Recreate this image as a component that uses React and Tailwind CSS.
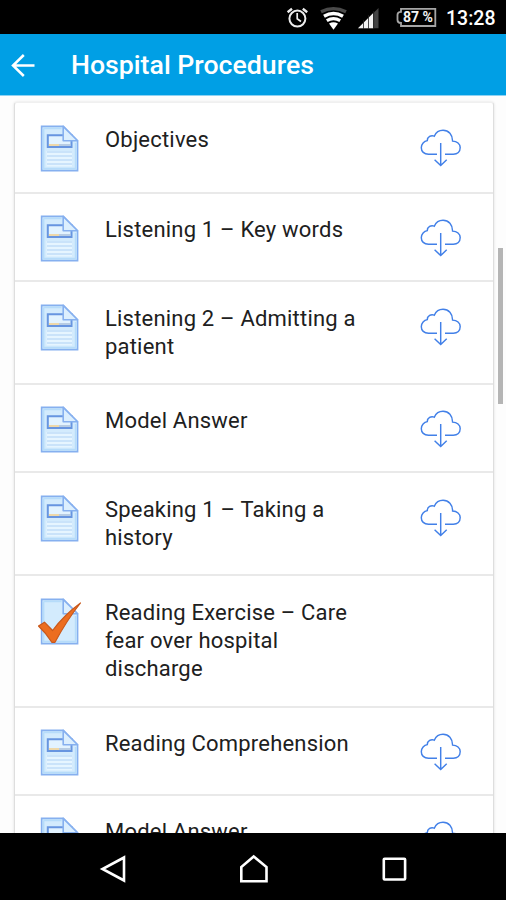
import React from "react";

const rows = [
  { lines: ["Objectives"], box: "h-[91px] pt-[23px]" },
  { lines: ["Listening 1 – Key words"], box: "h-[88px] pt-[22px]" },
  { lines: ["Listening 2 – Admitting a", "patient"], box: "h-[103px] pt-[23px]" },
  { lines: ["Model Answer"], box: "h-[88px] pt-[22px]" },
  { lines: ["Speaking 1 – Taking a", "history"], box: "h-[103px] pt-[23px]" },
  { lines: ["Reading Exercise – Care", "fear over hospital", "discharge"], box: "h-[132px] pt-[23px]", done: true },
  { lines: ["Reading Comprehension"], box: "h-[88px] pt-[22px]" },
  { lines: ["Model Answer"], box: "h-[88px] pt-[22px]" },
];

function PageIcon({ done }) {
  return (
    <svg className="-mt-px ml-6 h-[48px] w-[44px] shrink-0 overflow-visible" viewBox="0 0 44 48" fill="none">
      <path d="M2.6 1.4H24.2L38.6 15.8V45.6H2.6Z" fill="#d3ebfd" stroke="#86b0ef" strokeWidth="1.6" />
      <path d="M4.6 3.4H22.5M4.6 3.4V43.6H36.6V18" stroke="#b6dcfa" strokeWidth="1.6" />
      {!done && (
        <>
          <rect x="7.5" y="26" width="25.5" height="15.5" fill="#e6f5ff" />
          <path d="M8 27H33M8 31H33M8 35H33M8 39H33" stroke="#aed1f6" strokeWidth="1.2" />
          <path d="M8.8 10.2H32.5V22H8.8Z" fill="#e2f3ff" stroke="#6795e0" strokeWidth="2" />
          <path d="M10 20H20" stroke="#f0cf8c" strokeWidth="1.5" />
          <path d="M20 20H31.5" stroke="#a9bfda" strokeWidth="1.5" />
        </>
      )}
      <path d="M24.2 1.4V15.8H38.6Z" fill="#dceffe" stroke="#86b0ef" strokeWidth="1.6" strokeLinejoin="round" />
      {done && (
        <path d="M-0.5 28L5.5 24.2L13.6 32.5Q25 17 41.5 5Q28 22 16 44.3H12.8Q7 35 -0.5 28Z" fill="#ec6d20" stroke="#c9581b" strokeWidth="1.2" strokeLinejoin="round" />
      )}
    </svg>
  );
}

function CloudIcon() {
  return (
    <svg className="mr-[31px] mt-[3px] h-[40px] w-[42px] shrink-0" viewBox="0 -0.4 42 40" fill="none" stroke="#4280e8" strokeWidth="1.45">
      <path d="M17 24.9H8.5C4 24.9 1.3 22 1.3 18.3C1.3 14.5 4.1 11.7 7.3 11.2C7.2 7.5 11.2 5.3 14.3 6.8C16.2 2.5 19.5 0.9 23 0.9C28.7 0.9 32.6 5.4 32.6 11.7C37 11.7 40.2 14.6 40.2 18.2C40.2 22.2 37.5 24.9 33.3 24.9H25" />
      <path d="M20.7 13.5V36M14.6 30.4L20.7 36.2L26.7 30.4" />
    </svg>
  );
}

function StatusBar() {
  return (
    <div className="flex h-[34px] shrink-0 items-center bg-black pl-[286px] text-white">
      <svg className="h-[34px] w-[154px] shrink-0" viewBox="286 0 154 34" fill="none">
        <g stroke="#ededed" strokeWidth="2">
          <circle cx="297.4" cy="18.6" r="8" />
          <path d="M297.2 13V18.8L301 21.5" strokeWidth="1.7" />
          <path d="M287.6 12.2L292 8.8M302.8 8.8L307.2 12.2" strokeWidth="2.4" />
        </g>
        <path d="M321 11.8Q333.5 5.5 346 11.8" stroke="#4a4a4a" strokeWidth="3.2" />
        <path d="M324 16.2Q333.5 10.8 343 16.2" stroke="#fff" strokeWidth="3.6" />
        <path d="M326.8 20.6Q333.5 16.6 340.2 20.6" stroke="#fff" strokeWidth="3.2" />
        <path d="M329 23.6Q333.5 21 338 23.6L333.5 29.8Z" fill="#fff" />
        <path d="M358 28.3L378.5 8V28.3Z" fill="#444" />
        <path d="M358 28.3L373 13.3V28.3Z" fill="#f4f4f4" />
        <path d="M363.5 20V29M368.5 15V29M373.7 11V29" stroke="#222" strokeWidth="0.8" />
        <path d="M401 8.8H435.3V26H401V23Q397.5 23 397.5 20V14.8Q397.5 11.8 401 11.8Z" stroke="#a5a5a5" strokeWidth="1.8" />
        <text x="403" y="22.3" fill="#f4f4f4" fontFamily="Roboto, sans-serif" fontSize="14.5" fontWeight="700" textLength="30" lengthAdjust="spacingAndGlyphs">87 %</text>
      </svg>
      <span className="ml-[6px] mt-[3px] text-[19.5px] font-medium leading-none">13:28</span>
    </div>
  );
}

export default function App() {
  return (
    <main className="flex h-[900px] w-[506px] flex-col overflow-hidden bg-[#fdfdfd] font-[Roboto,sans-serif]">
      <StatusBar />
      <header className="flex h-[62px] shrink-0 items-center border-b border-[#8dd2f3] bg-[#009fe5] text-white">
        <svg className="ml-[11px] h-6 w-6" viewBox="0 0 24 24" fill="none" stroke="currentColor" strokeWidth="2.5">
          <path d="M23.5 12.5H2M12.8 2L2 12.5L12.8 23" />
        </svg>
        <h1 className="ml-[36px] whitespace-nowrap text-[26.7px] font-medium leading-8">Hospital Procedures</h1>
      </header>
      <div className="flex min-h-0 flex-1 items-start overflow-hidden pl-[14px] pt-[6px]">
        <ul className="w-[480px] shrink-0 rounded-t-[3px] border-x border-t border-x-[#dedede] border-t-[#f0f0f0] bg-white shadow-[0_0_3px_rgba(0,0,0,0.12)]">
          {rows.map((row, index) => (
            <li key={index} className={`flex items-start border-b-2 border-[#e9e9e9] ${row.box}`}>
              <PageIcon done={row.done} />
              <div className="ml-[22px] flex-1 whitespace-nowrap text-[22px] leading-7 tracking-[0.2px] text-[#202020]">
                {row.lines.map((line) => <div key={line}>{line}</div>)}
              </div>
              {!row.done && <CloudIcon />}
            </li>
          ))}
        </ul>
        <div className="ml-[4px] mt-[146px] h-[156px] w-[5px] shrink-0 bg-[#b5b5b5]" />
      </div>
      <nav className="h-[67px] shrink-0 bg-black">
        <svg className="h-[67px] w-[506px]" viewBox="0 833 506 67" fill="none" stroke="#fff" strokeWidth="2.6">
          <path d="M124 857.5V880.5L102.5 869Z" />
          <path d="M241.3 881.2V867L253.7 856.5L266.5 867V881.2Z" />
          <rect x="383.8" y="858.7" width="21.3" height="20.8" rx="0.8" />
        </svg>
      </nav>
    </main>
  );
}
